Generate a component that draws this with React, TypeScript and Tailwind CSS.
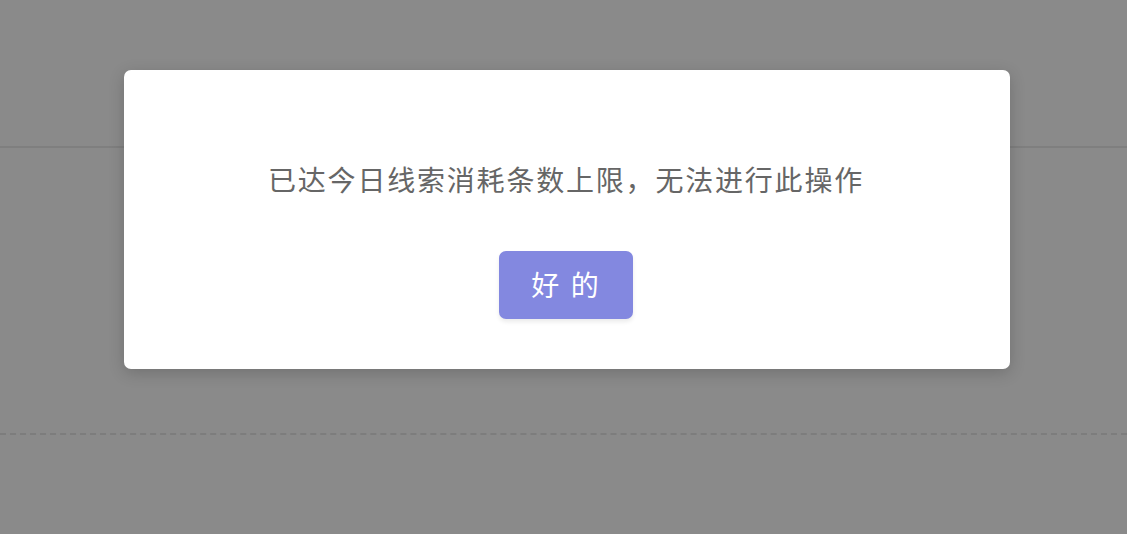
export default function App() {
  return (
    <div
      className="relative h-[534px] w-[1127px] overflow-hidden bg-[#8a8a8a]"
      style={{ fontFamily: '"Noto Sans", "Noto Sans CJK SC", sans-serif' }}
    >
      {/* page behind the mask */}
      <div className="h-[148px] border-b-2 border-[#7f7f7f]" />
      <div className="mt-[285px] border-t-2 border-dashed border-[#7d7d7d]" />

      {/* dialog */}
      <div className="absolute inset-0 flex items-start justify-start pl-[124px] pt-[70px]">
        <div className="flex h-[299px] w-[886px] flex-col items-center rounded-[7px] bg-white shadow-[0_4px_16px_rgba(0,0,0,0.18)]">
          <p className="mt-[92px] pr-[2px] text-[28px] leading-[36px] tracking-[1.8px] text-[#666666]">
            已达今日线索消耗条数上限，无法进行此操作
          </p>
          <button className="mr-[2px] mt-[53px] flex h-[68px] w-[134px] items-center justify-center rounded-[7px] bg-[#8388e0] text-[28px] tracking-[2px] text-white shadow-[0_3px_4px_rgba(0,0,0,0.08)]">
            好 的
          </button>
        </div>
      </div>
    </div>
  )
}
